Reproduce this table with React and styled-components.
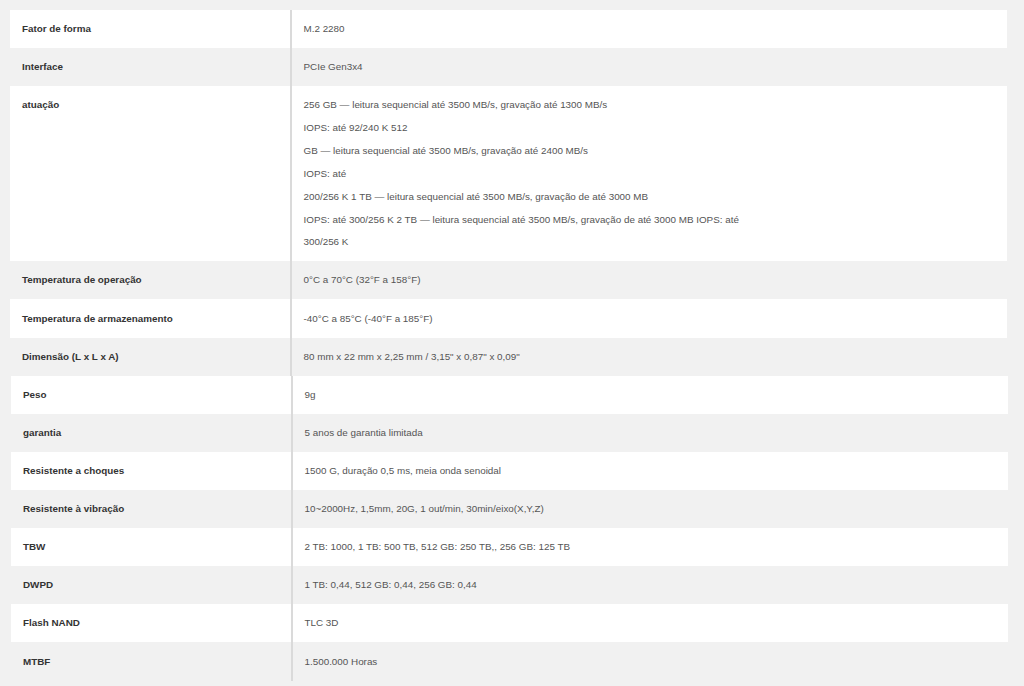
import React from "react";
import styled, { createGlobalStyle } from "styled-components";

const Global = createGlobalStyle`
  html, body { margin: 0; padding: 0; background: #f1f1f1; }
  body { font-family: "Liberation Sans", Arial, sans-serif; }
`;

const Page = styled.div`
  padding-top: 10px;
  min-height: 686px;
  box-sizing: border-box;
`;

const Table = styled.div`
  display: flex;
  flex-direction: column;
  width: 997px;
  margin-left: ${(p) => p.$offset}px;
`;

const Row = styled.div`
  display: grid;
  grid-template-columns: 280px 2px 1fr;
  background: ${(p) => (p.$alt ? "#f1f1f1" : "#ffffff")};
`;

const Divider = styled.div`
  background: #dadada;
`;

const Label = styled.div`
  padding: 8.15px 12px 7.15px 12px;
  font-size: 9.85px;
  font-weight: bold;
  line-height: 22.83px;
  color: #333;
`;

const Value = styled.div`
  padding: 8.15px 12px 7.15px 11.5px;
  font-size: 9.85px;
  line-height: 22.83px;
  color: #555;
`;

const Line = styled.div``;

const first = [
  ["Fator de forma", ["M.2 2280"]],
  ["Interface", ["PCIe Gen3x4"]],
  [
    "atuação",
    [
      "256 GB — leitura sequencial até 3500 MB/s, gravação até 1300 MB/s",
      "IOPS: até 92/240 K 512",
      "GB — leitura sequencial até 3500 MB/s, gravação até 2400 MB/s",
      "IOPS: até",
      "200/256 K 1 TB — leitura sequencial até 3500 MB/s, gravação de até 3000 MB",
      "IOPS: até 300/256 K 2 TB — leitura sequencial até 3500 MB/s, gravação de até 3000 MB IOPS: até",
      "300/256 K",
    ],
  ],
  ["Temperatura de operação", ["0°C a 70°C (32°F a 158°F)"]],
  ["Temperatura de armazenamento", ["-40°C a 85°C (-40°F a 185°F)"]],
  ["Dimensão (L x L x A)", ["80 mm x 22 mm x 2,25 mm / 3,15\" x 0,87\" x 0,09\""]],
];

const second = [
  ["Peso", ["9g"]],
  ["garantia", ["5 anos de garantia limitada"]],
  ["Resistente a choques", ["1500 G, duração 0,5 ms, meia onda senoidal"]],
  ["Resistente à vibração", ["10~2000Hz, 1,5mm, 20G, 1 out/min, 30min/eixo(X,Y,Z)"]],
  ["TBW", ["2 TB: 1000, 1 TB: 500 TB, 512 GB: 250 TB,, 256 GB: 125 TB"]],
  ["DWPD", ["1 TB: 0,44, 512 GB: 0,44, 256 GB: 0,44"]],
  ["Flash NAND", ["TLC 3D"]],
  ["MTBF", ["1.500.000 Horas"]],
];

function SpecTable({ rows, offset }) {
  return (
    <Table $offset={offset}>
      {rows.map(([k, v], i) => (
        <Row key={k} $alt={i % 2 === 1}>
          <Label>{k}</Label>
          <Divider />
          <Value>
            {v.map((l, j) => (
              <Line key={j}>{l}</Line>
            ))}
          </Value>
        </Row>
      ))}
    </Table>
  );
}

export default function App() {
  return (
    <Page>
      <Global />
      <SpecTable rows={first} offset={10} />
      <SpecTable rows={second} offset={11} />
    </Page>
  );
}
